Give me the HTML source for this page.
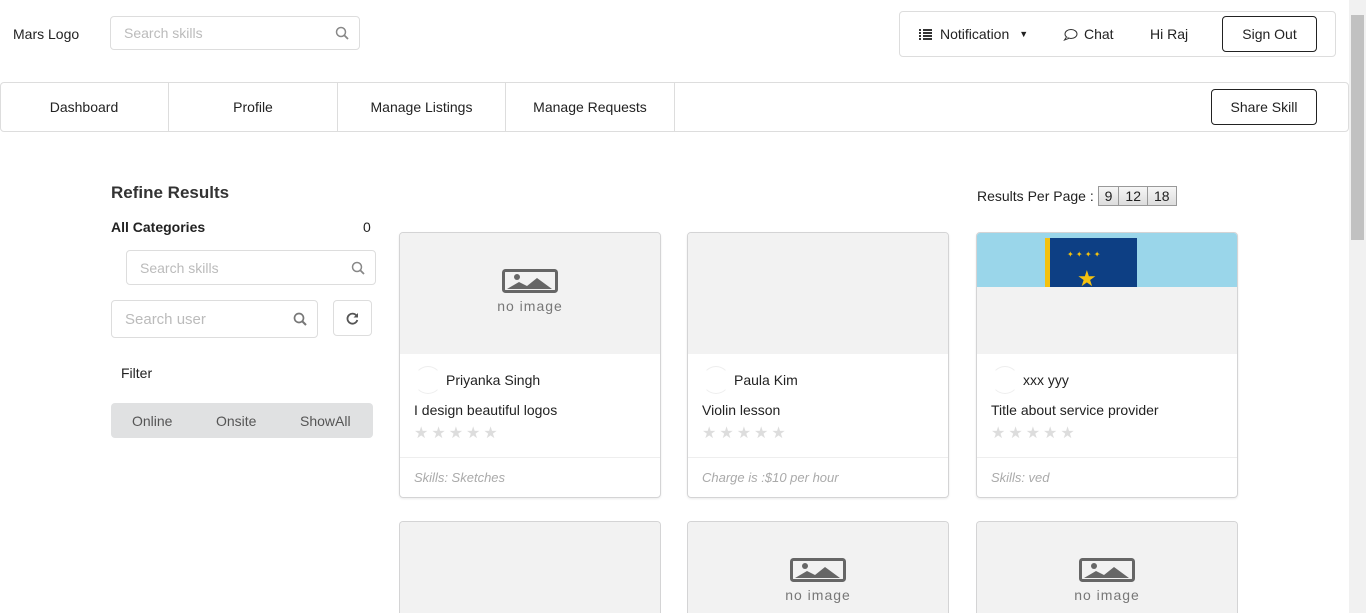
<!DOCTYPE html>
<html style="width:1366px;height:613px;overflow:hidden"><head><style>
*{box-sizing:border-box;margin:0;padding:0}
body{width:1366px;height:613px;overflow:hidden;font-family:"Liberation Sans",sans-serif;color:#222;background:#fff;position:relative;font-size:14px}
.a{position:absolute}
.inp{position:absolute;border:1px solid #ddd;border-radius:4px;color:#bbb;font-size:14px;padding-left:13px;display:flex;align-items:center}
.mag{position:absolute;right:10px;top:50%;margin-top:-7px}
.btn{position:absolute;border:1px solid #222;border-radius:4px;display:flex;align-items:center;justify-content:center;font-size:14px}
.card{position:absolute;width:262px;height:266px;border:1px solid #d4d4d5;border-radius:4px;overflow:hidden;box-shadow:0 1px 2px rgba(0,0,0,.08)}
.card.r2{height:92px;border-bottom:none;border-radius:4px 4px 0 0;box-shadow:none}
.img{height:121px;background:#f2f2f2;position:relative}
.nm{position:absolute;left:14px;top:133px;font-size:14px;display:flex;align-items:center}
.av{width:28px;height:28px;border:1px solid #eee;border-radius:50%;margin-right:4px;border-color:#eee #fff}
.tt{position:absolute;left:14px;top:169px;font-size:14px}
.st{position:absolute;left:14px;top:190px;color:#ddd;font-size:16px;letter-spacing:3px}
.ft{position:absolute;left:0;right:0;top:224px;border-top:1px solid #eee;padding:12px 14px;font-style:italic;color:#aaa;font-size:13px}
.noimg{position:absolute;left:80px;top:36px;width:100px;text-align:center;color:#666}
.pp{display:inline-block;border:1px solid #999;background:linear-gradient(#f6f6f6,#ddd);padding:1px 6px;font-size:14px;margin-left:-1px}
</style></head><body>
<div class="a" style="left:13px;top:26px;font-size:14px">Mars Logo</div>
<div class="inp" style="left:110px;top:16px;width:250px;height:34px">Search skills<svg class="mag" width="14" height="14" viewBox="0 0 14 14"><circle cx="6" cy="6" r="4.5" fill="none" stroke="#888" stroke-width="1.5"/><path d="M9.5 9.5L13 13" stroke="#888" stroke-width="1.8"/></svg></div>

<div class="a" style="left:899px;top:11px;width:437px;height:46px;border:1px solid #ddd;border-radius:4px"></div>
<div class="a" style="left:919px;top:26px;font-size:14px;display:flex;align-items:center"><svg width="13" height="11" viewBox="0 0 13 11"><path d="M0 1h2M4 1h9M0 4h2M4 4h9M0 7h2M4 7h9M0 10h2M4 10h9" stroke="#333" stroke-width="2"/></svg><span style="margin-left:8px">Notification</span><span style="margin-left:10px;font-size:9px">▼</span></div>
<div class="a" style="left:1063px;top:26px;display:flex;align-items:center"><svg width="15" height="13" viewBox="0 0 15 13"><ellipse cx="8" cy="6" rx="6" ry="4.5" fill="none" stroke="#333"/><path d="M3.5 9L1.5 12 6 10.3" fill="#fff" stroke="#333"/></svg><span style="margin-left:6px">Chat</span></div>
<div class="a" style="left:1150px;top:26px">Hi Raj</div>
<div class="btn" style="left:1222px;top:16px;width:95px;height:36px">Sign Out</div>

<div class="a" style="left:0;top:82px;width:1349px;height:50px;border:1px solid #ddd;border-radius:4px"></div>
<div class="a" style="left:0;top:83px;width:169px;height:48px;border-right:1px solid #ddd;display:flex;align-items:center;justify-content:center">Dashboard</div>
<div class="a" style="left:169px;top:83px;width:169px;height:48px;border-right:1px solid #ddd;display:flex;align-items:center;justify-content:center">Profile</div>
<div class="a" style="left:338px;top:83px;width:168px;height:48px;border-right:1px solid #ddd;display:flex;align-items:center;justify-content:center">Manage Listings</div>
<div class="a" style="left:506px;top:83px;width:169px;height:48px;border-right:1px solid #ddd;display:flex;align-items:center;justify-content:center">Manage Requests</div>
<div class="btn" style="left:1211px;top:89px;width:106px;height:36px">Share Skill</div>

<div class="a" style="left:1349px;top:0;width:17px;height:613px;background:#f1f1f1"></div>
<div class="a" style="left:1351px;top:15px;width:13px;height:225px;background:#c1c1c1"></div>

<div class="a" style="left:111px;top:183px;font-size:17px;font-weight:bold;color:#333">Refine Results</div>
<div class="a" style="left:111px;top:219px;font-weight:bold;font-size:14px">All Categories</div>
<div class="a" style="left:363px;top:219px">0</div>
<div class="inp" style="left:126px;top:250px;width:250px;height:35px">Search skills<svg class="mag" width="14" height="14" viewBox="0 0 14 14"><circle cx="6" cy="6" r="4.5" fill="none" stroke="#888" stroke-width="1.5"/><path d="M9.5 9.5L13 13" stroke="#888" stroke-width="1.8"/></svg></div>
<div class="inp" style="left:111px;top:300px;width:207px;height:38px;font-size:15px">Search user<svg class="mag" width="14" height="14" viewBox="0 0 14 14"><circle cx="6" cy="6" r="4.5" fill="none" stroke="#777" stroke-width="1.7"/><path d="M9.5 9.5L13 13" stroke="#777" stroke-width="2"/></svg></div>
<div class="a" style="left:333px;top:300px;width:39px;height:36px;border:1px solid #ddd;border-radius:4px;display:flex;align-items:center;justify-content:center"><svg width="13" height="13" viewBox="0 0 13 13"><path d="M11 4.5A5 5 0 1 0 11.3 8" fill="none" stroke="#555" stroke-width="1.8"/><path d="M12 1v4.5H7.5z" fill="#555"/></svg></div>
<div class="a" style="left:121px;top:365px;font-size:14px">Filter</div>
<div class="a" style="left:111px;top:403px;width:262px;height:35px;background:#e0e1e2;border-radius:4px;color:#555;font-size:14px">
<span class="a" style="left:21px;top:10px">Online</span><span class="a" style="left:105px;top:10px">Onsite</span><span class="a" style="left:189px;top:10px">ShowAll</span></div>

<div class="a" style="left:977px;top:186px;font-size:14px">Results Per Page : <span class="pp" style="margin-left:0">9</span><span class="pp">12</span><span class="pp">18</span></div>

<div class="card" style="left:399px;top:232px"><div class="img"><div class="noimg"><svg width="56" height="24" viewBox="0 0 56 24"><rect x="1.5" y="1.5" width="53" height="21" rx="2" fill="none" stroke="#666" stroke-width="3"/><circle cx="15" cy="8" r="3" fill="#666"/><path d="M5 20l12-7 8 4 10-8 15 11z" fill="#666"/></svg><div style="font-size:14px;letter-spacing:1px;color:#777;margin-top:2px">no image</div></div></div>
<div class="nm"><span class="av"></span>Priyanka Singh</div><div class="tt">I design beautiful logos</div><div class="st">★★★★★</div><div class="ft">Skills: Sketches</div></div>

<div class="card" style="left:687px;top:232px"><div class="img"></div>
<div class="nm"><span class="av"></span>Paula Kim</div><div class="tt">Violin lesson</div><div class="st">★★★★★</div><div class="ft">Charge is :$10 per hour</div></div>

<div class="card" style="left:976px;top:232px"><div class="img"><div style="height:54px;background:#9ad6ea;position:relative"><div class="a" style="left:68px;top:5px;width:92px;height:49px;background:#0d3f84"></div><div class="a" style="left:68px;top:5px;width:5px;height:49px;background:#f4c10f"></div><div class="a" style="left:100px;top:38px;color:#f4c10f;font-size:22px;line-height:16px">★</div><div class="a" style="left:90px;top:17px;color:#f4c10f;font-size:8px">✦ ✦ ✦ ✦</div></div></div>
<div class="nm"><span class="av"></span>xxx yyy</div><div class="tt">Title about service provider</div><div class="st">★★★★★</div><div class="ft">Skills: ved</div></div>

<div class="card r2" style="left:399px;top:521px"><div class="img"></div></div>
<div class="card r2" style="left:687px;top:521px"><div class="img"><div class="noimg"><svg width="56" height="24" viewBox="0 0 56 24"><rect x="1.5" y="1.5" width="53" height="21" rx="2" fill="none" stroke="#666" stroke-width="3"/><circle cx="15" cy="8" r="3" fill="#666"/><path d="M5 20l12-7 8 4 10-8 15 11z" fill="#666"/></svg><div style="font-size:14px;letter-spacing:1px;color:#777;margin-top:2px">no image</div></div></div></div>
<div class="card r2" style="left:976px;top:521px"><div class="img"><div class="noimg"><svg width="56" height="24" viewBox="0 0 56 24"><rect x="1.5" y="1.5" width="53" height="21" rx="2" fill="none" stroke="#666" stroke-width="3"/><circle cx="15" cy="8" r="3" fill="#666"/><path d="M5 20l12-7 8 4 10-8 15 11z" fill="#666"/></svg><div style="font-size:14px;letter-spacing:1px;color:#777;margin-top:2px">no image</div></div></div></div>
</body></html>
